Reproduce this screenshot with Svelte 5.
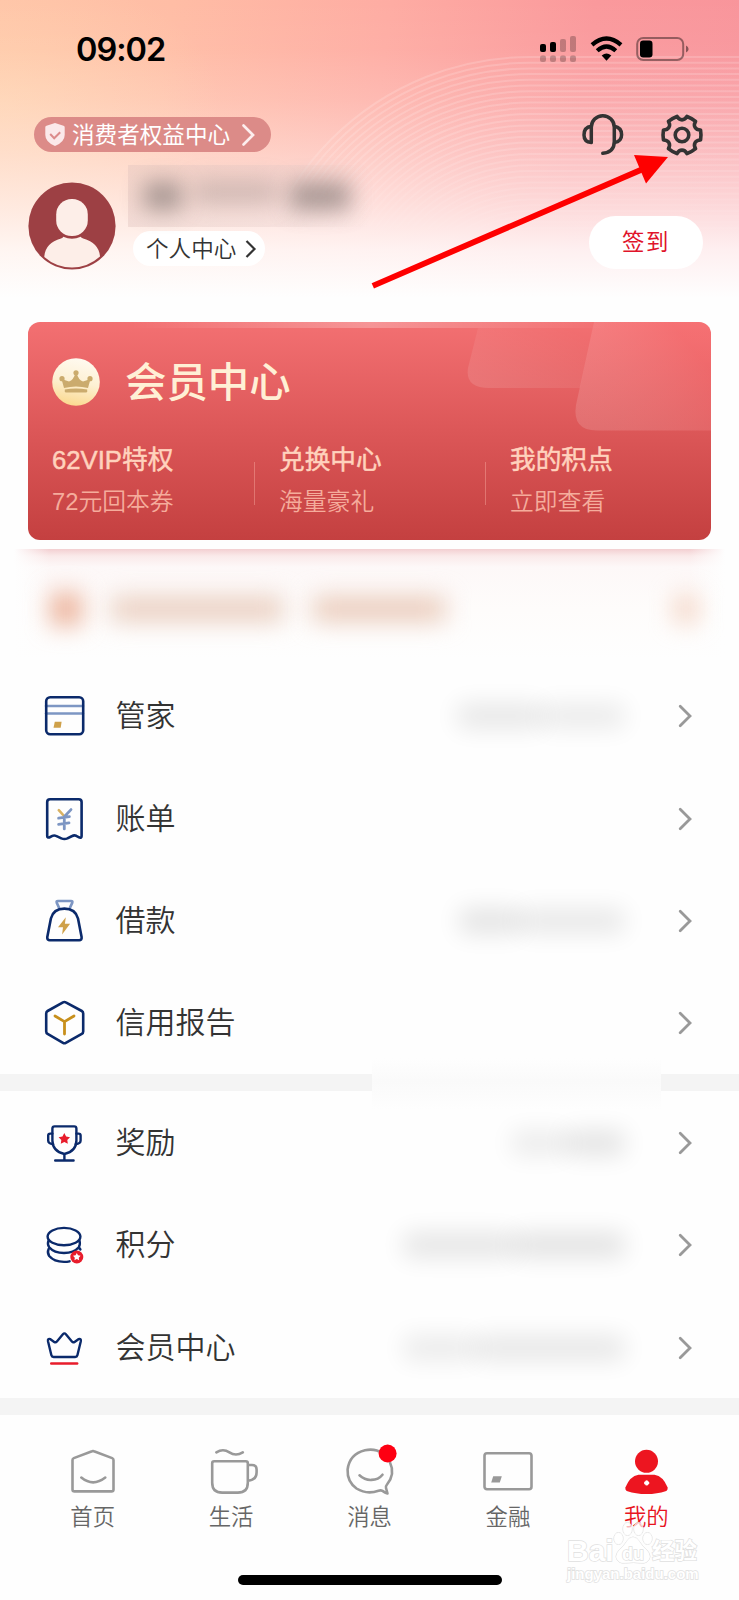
<script lang="ts">
  interface Row {
    icon: string;
    label: string;
    blobs: { width: number; tone: number }[];
  }

  const accountRows: Row[] = [
    { icon: 'card', label: '管家', blobs: [{ width: 84, tone: 0.095 }, { width: 82, tone: 0.08 }] },
    { icon: 'bill', label: '账单', blobs: [] },
    { icon: 'loan', label: '借款', blobs: [{ width: 60, tone: 0.11 }, { width: 104, tone: 0.09 }] },
    { icon: 'credit', label: '信用报告', blobs: [] },
  ];

  const rewardRows: Row[] = [
    { icon: 'trophy', label: '奖励', blobs: [{ width: 54, tone: 0.075 }, { width: 58, tone: 0.11 }] },
    { icon: 'coins', label: '积分', blobs: [{ width: 110, tone: 0.1 }, { width: 110, tone: 0.115 }] },
    { icon: 'crown', label: '会员中心', blobs: [{ width: 72, tone: 0.08 }, { width: 148, tone: 0.095 }] },
  ];

  const perks = [
    { title: '62VIP特权', sub: '72元回本券' },
    { title: '兑换中心', sub: '海量豪礼' },
    { title: '我的积点', sub: '立即查看' },
  ];

  const tabs = [
    { icon: 'home', label: '首页' },
    { icon: 'life', label: '生活' },
    { icon: 'message', label: '消息' },
    { icon: 'finance', label: '金融' },
    { icon: 'me', label: '我的' },
  ];

  const rings = Array.from({ length: 34 }, (_, i) => 281 - i * 5.7);

  function polar(deg: number, r: number): string {
    const a = (deg * Math.PI) / 180;
    return `${(22 + r * Math.cos(a)).toFixed(2)} ${(22 + r * Math.sin(a)).toFixed(2)}`;
  }

  // six-lobed gear outline, one lobe every 60 degrees
  function gearPath(): string {
    let d = `M${polar(-15, 19.2)}`;
    for (let a = 0; a < 360; a += 60) {
      d += ` Q${polar(a, 19.4)} ${polar(a + 15, 19.2)}`;
      d += ` C${polar(a + 20, 14.2)} ${polar(a + 40, 14.2)} ${polar(a + 45, 19.2)}`;
    }
    return d + 'Z';
  }

  function starPoints(cx: number, cy: number, r: number): string {
    return Array.from({ length: 10 }, (_, i) => {
      const a = ((i * 36 - 90) * Math.PI) / 180;
      const k = i % 2 ? r * 0.52 : r;
      return `${(cx + k * Math.cos(a)).toFixed(2)},${(cy + k * Math.sin(a)).toFixed(2)}`;
    }).join(' ');
  }
</script>

{#snippet rowIcon(name: string)}
  <svg class="row-icon" viewBox="0 0 44 44" fill="none" stroke="#0b2a6b" stroke-width="2.6" stroke-linecap="round" stroke-linejoin="round">
    {#if name === 'card'}
      <path d="M4 12H41M4 19.5H41" stroke="#7d96c3" />
      <rect x="4.2" y="3.2" width="37" height="37" rx="4" />
      <path d="M12.8 27.8h6.8l-.9 6h-7.2z" fill="#cfa14a" stroke="none" />
    {:else if name === 'bill'}
      <path d="M5.2 39V5q0-2.8 2.8-2.8h28.8q2.8 0 2.8 2.8v34q0 2-2 1.6l-3.4-1.8q-2-.9-4 .2l-4.8 2.4q-3 1.2-6 0L14 38.9q-1.8-.9-3.6 0l-3.2 1.6q-2 .4-2-1.5z" />
      <path d="M16.8 13.2l5.7 6.3" stroke="#d9b262" />
      <path d="M29 12.6l-6.700 7.100v12.200M16.600 21.200l10.800-1.500M16.600 27.400l10.400-1.500" stroke="#7d96c3" stroke-width="2.8" />
    {:else if name === 'loan'}
      <path d="M17 8.600l-2.300-5q-.5-1.600 1.200-1.600h13.200q1.700 0 1.200 1.600l-2.300 5" stroke="#7d96c3" />
      <path d="M5.300 38l3.600-18.500Q11.400 9.600 22.400 9.600T36 19.500l3.600 18.500q.4 3.200-2.400 3.200H7.800Q5 41.200 5.300 38z" />
      <path d="M23.800 18.200L16 28.300h5l-.9 7.200 8-10.700h-5.200z" fill="#cfa14a" stroke="none" />
    {:else if name === 'credit'}
      <path d="M21 1.400q1.400-.8 2.800 0L39.800 10q1.400.8 1.400 2.400v18q0 1.600-1.400 2.400L23.800 41.800q-1.400.8-2.800 0L5.600 32.800q-1.400-.8-1.400-2.400v-18q0-1.600 1.400-2.400z" />
      <path d="M13 15l9.500 5.600L32 15M22.500 20.600V33" stroke="#c8901c" stroke-width="2.8" />
    {:else if name === 'trophy'}
      <path d="M12.600 5.400h19.600q2.200 0 2.200 2.200v11.800q0 10.600-12 13.600-12-3-12-13.600V7.600q0-2.200 2.200-2.200zM22.400 33v6.200M13.200 39.500h18.400" stroke-width="2.4" />
      <path d="M10.400 12.600H8.200q-2 0-2 2v5q0 3.200 5 3.700M34.400 12.600h2.200q2 0 2 2v5q0 3.200-5 3.700" stroke-width="2.4" />
      <polygon points={starPoints(22.3, 18, 6)} fill="#e81c2b" stroke="none" />
    {:else if name === 'coins'}
      <ellipse cx="22" cy="13.600" rx="16.400" ry="8.700" stroke-width="2.4" />
      <path d="M6.600 17.400q-1.600 3.600.6 6.800 5 5.800 14.800 5.800t14.800-5.800q1.800-3 .6-6.800M6.600 26q-1.600 3.600.6 7Q12 38.700 22 38.900q3 0 5.600-.6M37.400 25l1 1.500" stroke-width="2.4" />
      <circle cx="34.800" cy="34" r="6.500" fill="#e81c2b" stroke="none" />
      <polygon points={starPoints(34.8, 34, 4)} fill="#fff" stroke="none" />
    {:else}
      <path d="M9.400 29.300L6 15.200q-.5-3 2.400-2l3.800 2.700q1.500 1 2.700-.4l6-7.300q1.500-1.700 3 0l6 7.300q1.200 1.400 2.700.4l3.800-2.700q2.900-1 2.400 2l-3.400 14.100q-.4 1.700-2.200 1.700H11.600q-1.800 0-2.200-1.700z" stroke-width="2.4" />
      <path d="M9.200 37.500h26" stroke="#e81c2b" stroke-width="2.4" />
    {/if}
  </svg>
{/snippet}

{#snippet listRow(row: Row)}
  <div class="row">
    {@render rowIcon(row.icon)}
    <span class="row-label">{row.label}</span>
    <div class="row-value">
      {#each row.blobs as blob}
        <i style="width: {blob.width}px; opacity: {blob.tone};"></i>
      {/each}
    </div>
    <svg class="row-arrow" viewBox="0 0 14 24" fill="none" stroke="#999" stroke-width="2.8" stroke-linecap="round">
      <path d="M2.200 2.200L12 12 2.200 21.800" />
    </svg>
  </div>
{/snippet}

<div class="screen">
  <header>
    <svg class="rings" viewBox="0 0 739 322" fill="none" stroke="#fff" stroke-width="2">
      <defs>
        <linearGradient id="ringFade" x1="0" y1="0" x2="0" y2="1">
          <stop offset="0.150" stop-color="#fff" stop-opacity="0.17" />
          <stop offset="0.450" stop-color="#fff" stop-opacity="0.16" />
          <stop offset="0.800" stop-color="#fff" stop-opacity="0" />
        </linearGradient>
        <mask id="ringMask">
          <rect width="739" height="322" fill="url(#ringFade)" stroke="none" />
        </mask>
      </defs>
      <g mask="url(#ringMask)">
        {#each rings as r}
          <path d="M739 {338 - r}H530A{r} {r} 0 0 0 {530 - r} 338" />
        {/each}
      </g>
    </svg>

    <div class="status">
      <span class="time">09:02</span>
      <svg width="150" height="30" viewBox="0 0 150 30">
        <g fill="#000">
          <rect x="0" y="9" width="6" height="8" rx="2" />
          <rect x="10" y="7" width="6" height="10" rx="2" />
        </g>
        <g fill="#000" opacity="0.230">
          <rect x="20" y="4" width="6" height="13" rx="2" />
          <rect x="30" y="1" width="6" height="16" rx="2" />
          <rect x="0" y="20.500" width="6" height="6.500" rx="2" />
          <rect x="10" y="20.500" width="6" height="6.500" rx="2" />
          <rect x="20" y="20.500" width="6" height="6.500" rx="2" />
          <rect x="30" y="20.500" width="6" height="6.500" rx="2" />
        </g>
        <g fill="none" stroke="#000" stroke-width="4.200">
          <path d="M52 9.800Q66.500-2.800 81 9.800" />
          <path d="M57.200 15.700Q66.500 7.300 75.800 15.700" />
        </g>
        <path d="M61.700 20.400Q66.500 16.600 71.300 20.400L66.500 25.800z" />
        <rect x="97.200" y="3" width="46" height="22" rx="6" fill="none" stroke="#000" stroke-opacity="0.400" stroke-width="2" />
        <rect x="100" y="5.500" width="12.500" height="17" rx="3.200" />
        <path d="M146 10.500q2.600 1 2.600 3.500T146 17.500z" opacity="0.450" />
      </svg>
    </div>

    <div class="toolbar">
      <div class="rights">
        <svg width="20" height="23" viewBox="0 0 20 23">
          <path d="M10 0l8.500 2.700q1.200.3 1.200 1.600V12q0 7-9.700 11Q.3 19 .3 12V4.300Q.3 3 1.500 2.700z" fill="#fbe9ea" />
          <path d="M5.200 11l4 4.200 6-6" fill="none" stroke="#dc8b8b" stroke-width="2" />
        </svg>
        <span>消费者权益中心</span>
        <svg width="13" height="22" viewBox="0 0 13 22" fill="none" stroke="#fdeeee" stroke-width="2.700" stroke-linecap="round">
          <path d="M1.500 1.500L11 11l-9.500 9.500" />
        </svg>
      </div>
      <div class="tools">
        <svg width="44" height="44" viewBox="0 0 44 44" fill="none" stroke="#333" stroke-width="3.500" stroke-linecap="round" stroke-linejoin="round">
          <path d="M10.300 29V14.200a11.500 11.500 0 0 1 23 0v14.300q0 10.600-11.500 11.800M10.300 13.300q-7.300 1-7.300 8.600 0 7 7.300 7.600M33.300 13.300q7.300 1.300 7.300 8.400 0 6.800-7.300 7.800" />
        </svg>
        <svg width="44" height="44" viewBox="0 0 44 44" fill="none" stroke="#333" stroke-width="3.600" stroke-linejoin="round">
          <path d={gearPath()} />
          <circle cx="22" cy="22" r="6.800" />
        </svg>
      </div>
    </div>

    <div class="profile">
      <svg class="avatar" viewBox="0 0 88 88">
        <circle cx="44" cy="44" r="43.600" fill="#9d4044" />
        <path d="M16.300 75Q17 61 33 56.500q2-.8 2.300-1.700 8.700 3.700 17.400 0 .5 1 2.500 1.700Q71 61 72 74.500 60 85.300 44 85.600 28 85.300 16.300 75z" fill="#fdeee8" />
        <rect x="28.200" y="17" width="31.600" height="37" rx="15.500" fill="#fdeee8" />
      </svg>
      <div class="identity">
        <div class="name-mask"><i></i><i></i><i></i></div>
        <div class="center-link">
          <span>个人中心</span>
          <svg width="11" height="18" viewBox="0 0 11 18" fill="none" stroke="#333" stroke-width="2.200">
            <path d="M1.500 1L9.500 9l-8 8" />
          </svg>
        </div>
      </div>
      <div class="checkin">签到</div>
    </div>

    <svg class="pointer" viewBox="0 0 300 140">
      <path d="M.8 130.800L271 14" stroke="#fe0000" stroke-width="5.800" />
      <path d="M262 0L296 2 274 28.500z" fill="#fe0000" />
    </svg>
  </header>

  <section class="vip">
    <svg class="vip-art" viewBox="0 0 683 218">
      <defs>
        <linearGradient id="panelA" x1="0" y1="1" x2="1" y2="0">
          <stop offset="0" stop-color="#fff" stop-opacity="0.130" />
          <stop offset="0.900" stop-color="#fff" stop-opacity="0" />
        </linearGradient>
        <linearGradient id="panelB" x1="0" y1="0.900" x2="0.900" y2="0.300">
          <stop offset="0" stop-color="#fff" stop-opacity="0.140" />
          <stop offset="1" stop-color="#ff7378" stop-opacity="0.250" />
        </linearGradient>
      </defs>
      <path d="M450 6L440 46Q437 66 461 66H552L565 6z" fill="url(#panelA)" />
      <path d="M566 0L548 83Q544 108.500 569 108.500H683V0z" fill="url(#panelB)" />
    </svg>
    <div class="vip-head">
      <svg width="48" height="48" viewBox="0 0 48 48">
        <defs>
          <linearGradient id="coin" x1="0.600" y1="0" x2="0.400" y2="1">
            <stop offset="0" stop-color="#fffaf0" />
            <stop offset="0.500" stop-color="#fdf0d3" />
            <stop offset="1" stop-color="#fbd98f" />
          </linearGradient>
        </defs>
        <circle cx="24" cy="24" r="23.800" fill="url(#coin)" />
        <g fill="#cbab6d">
          <circle cx="24" cy="14.800" r="2.600" />
          <circle cx="10" cy="20.700" r="2.600" />
          <circle cx="38" cy="20.700" r="2.600" />
          <path d="M9.500 21l7.500 2.500q4.500-1.500 6.300-8h1.400q1.800 6.500 6.300 8l7.500-2.500-2.500 9Q24 27 12 30z" />
          <path d="M12.800 31.500Q24 29.300 35.200 31.500v1.800q0 1.200-1.200 1.200H14q-1.200 0-1.200-1.200z" />
        </g>
      </svg>
      <h1>会员中心</h1>
    </div>
    <div class="perks">
      {#each perks as perk}
        <div class="perk">
          <b>{perk.title}</b>
          <span>{perk.sub}</span>
        </div>
      {/each}
    </div>
  </section>

  <div class="notice">
    <i class="dot"></i>
    <i class="line"></i>
    <i class="line short"></i>
    <i class="end"></i>
  </div>

  <section class="list">
    {#each accountRows as row}
      {@render listRow(row)}
    {/each}
  </section>
  <div class="divider"><div class="smudge"></div></div>
  <section class="list">
    {#each rewardRows as row}
      {@render listRow(row)}
    {/each}
  </section>
  <div class="divider"></div>

  <nav>
    {#each tabs as tab}
      <div class="tab" class:active={tab.icon === 'me'}>
        <svg viewBox="0 0 50 50" fill="none" stroke="#999" stroke-width="2.600" stroke-linecap="round" stroke-linejoin="round">
          {#if tab.icon === 'home'}
            <path d="M4.500 13q0-1.400 1.300-1.900L24 4.300q1-.4 2 0l18.200 6.800q1.300.5 1.300 1.900v29.400q0 2-2 2h-37q-2 0-2-2zM13.300 30.600q11.700 9.600 24 0" />
          {:else if tab.icon === 'life'}
            <path d="M8.200 14.200h31.600q2 0 2 2v19.500q0 9.900-9.900 9.900H16.100q-9.900 0-9.900-9.900V16.200q0-2 2-2zM42 18h4q4.600 0 4.600 4.600v2.600q0 7.800-8.400 8.600M10.400 5.400q6.600-4.200 13 0t13.400 0" />
          {:else if tab.icon === 'message'}
            <path d="M45 15.500Q50.500 27 42 37.500q-1.600 1.800-1 3.500l1.500 5.500q-2.500-.8-5-2.600-1.800-1-4-.2Q22 48 11.500 41.500 2 34.500 2.600 22.500 4.500 7 20 3.200q10-2 17.500 3M14.500 28.300q5.500 5 12 4.600 7-.2 11-5.200" />
            <circle cx="42.600" cy="6.500" r="9" fill="#fe0012" stroke="none" />
          {:else if tab.icon === 'finance'}
            <rect x="1.500" y="6.200" width="47" height="36" rx="2.500" />
            <path d="M10.200 29.200h8.600l-2 6.200H8.200z" fill="#999" stroke="none" />
          {:else}
            <g fill="#ed1520" stroke="none">
              <circle cx="25.500" cy="14.300" r="11.500" />
              <path d="M17.500 27.700h16q8.700 1.500 13 12.500.7 3-2 4Q36.500 47 25.500 47T6.500 44.200q-2.700-1-2-4 4.300-11 13-12.500z" />
            </g>
            <path d="M25.700 34.800v2.200M24.600 35.900h2.200" stroke="#fff" stroke-width="3.200" />
          {/if}
        </svg>
        <span>{tab.label}</span>
      </div>
    {/each}
    <div class="home-bar"></div>
    <div class="watermark">
      <svg width="40" height="44" viewBox="0 0 40 44" fill="#fff" fill-opacity="0.700" stroke="#e0e0e0" stroke-width="1">
        <ellipse cx="5.500" cy="17.500" rx="4.600" ry="6" />
        <ellipse cx="14.500" cy="8" rx="4.600" ry="6.500" />
        <ellipse cx="25.500" cy="8" rx="4.600" ry="6.500" />
        <ellipse cx="34.500" cy="17.500" rx="4.600" ry="6" />
        <path d="M20 16q4 0 6.500 4.500t7.500 8.500q6 7 0 12-3 2-8 1t-12 0q-5 1-8-1-6-5 0-12 5-4 7.500-8.500T20 16z" />
      </svg>
      <span class="wm-bai">Bai</span>
      <span class="wm-du">du</span>
      <span class="wm-cn">经验</span>
      <span class="wm-url">jingyan.baidu.com</span>
    </div>
  </nav>
</div>

<style>
  :global(body) {
    margin: 0;
    background: #fff;
  }

  .screen {
    width: 739px;
    height: 1600px;
    display: flex;
    flex-direction: column;
    overflow: hidden;
    background: #fefefe;
    color: #333;
    font-family: 'Liberation Sans', 'Noto Sans CJK SC', sans-serif;
  }

  svg {
    display: block;
    flex-shrink: 0;
    overflow: visible;
  }

  /* Header */
  header {
    position: relative;
    height: 322px;
    flex-shrink: 0;
    background:
      linear-gradient(180deg, rgba(255, 255, 255, 0) 0, rgba(255, 255, 255, 0.04) 50px, rgba(255, 253, 252, 0.17) 98px, rgba(255, 253, 252, 0.38) 150px, rgba(255, 253, 252, 0.62) 200px, rgba(255, 254, 254, 0.86) 250px, #fefefe 298px),
      radial-gradient(ellipse 220px 130px at 0 100px, rgba(255, 226, 180, 0.4), rgba(255, 226, 180, 0)),
      linear-gradient(98deg, #ffc4a8 0, #ffbda5 22%, #feaca3 50%, #fa999c 76%, #f8949b 100%);
  }

  .rings {
    position: absolute;
    inset: 0;
    width: 739px;
    height: 322px;
  }

  .status,
  .toolbar,
  .profile {
    position: relative;
    display: flex;
    box-sizing: border-box;
  }

  .status {
    height: 98px;
    padding: 0 49px 0 76px;
    align-items: center;
    justify-content: space-between;
  }

  .status svg {
    margin-top: 2px;
  }

  .time {
    margin-top: 2px;
    font: 600 32.5px/40px Inter, sans-serif;
    letter-spacing: -1px;
    color: #000;
  }

  .toolbar {
    height: 67px;
    padding: 6px 35px 0 34px;
    align-items: center;
    justify-content: space-between;
  }

  .rights {
    display: flex;
    align-items: center;
    width: 237px;
    height: 35px;
    box-sizing: border-box;
    padding-left: 11px;
    border-radius: 18px;
    background: #dc8b88;
    color: #fff;
    font-size: 22.6px;
  }

  .rights span {
    margin: 2px 12px 0 7px;
    white-space: nowrap;
    line-height: 35px;
  }

  .tools {
    display: flex;
    gap: 35px;
  }

  .profile {
    height: 101px;
    padding: 0 36px 0 28px;
    align-items: flex-start;
  }

  .avatar {
    width: 88px;
    height: 88px;
    margin-top: 17px;
  }

  .identity {
    display: flex;
    flex-direction: column;
    gap: 4px;
    margin-left: 12px;
  }

  .name-mask {
    display: flex;
    align-items: center;
    gap: 12px;
    box-sizing: border-box;
    width: 240px;
    height: 62px;
    padding-left: 16px;
    background: linear-gradient(90deg, rgba(225, 195, 190, 0.4), rgba(225, 200, 198, 0.25) 70%, rgba(225, 200, 198, 0));
  }

  .name-mask i {
    width: 38px;
    height: 28px;
    background: #8f827f;
    filter: blur(11px);
    opacity: 0.76;
  }

  .name-mask i:nth-child(2) {
    width: 84px;
    height: 24px;
    margin-top: -8px;
    opacity: 0.36;
  }

  .name-mask i:nth-child(3) {
    width: 60px;
  }

  .center-link {
    display: flex;
    align-items: center;
    gap: 9px;
    width: 132px;
    height: 35px;
    box-sizing: border-box;
    margin-left: 5px;
    padding-left: 13px;
    border-radius: 18px;
    background: #fff;
    font-size: 22.6px;
    font-weight: 350;
    line-height: 35px;
    white-space: nowrap;
  }

  .center-link span {
    padding-top: 1px;
  }

  .checkin {
    width: 114px;
    height: 53px;
    margin: 51px 0 0 auto;
    border-radius: 27px;
    background: #fff;
    color: #e0142b;
    font-size: 22.4px;
    font-weight: 400;
    line-height: 54px;
    letter-spacing: 1.6px;
    text-align: center;
  }

  .pointer {
    position: absolute;
    left: 372px;
    top: 155px;
    width: 300px;
    height: 140px;
  }

  /* Member card */
  .vip {
    position: relative;
    box-sizing: border-box;
    height: 218px;
    flex-shrink: 0;
    margin: 0 28px;
    padding: 36px 24px 0;
    border-radius: 12px;
    overflow: hidden;
    background:
      linear-gradient(90deg, rgba(255, 255, 255, 0) 15%, rgba(255, 255, 255, 0.26) 50%, rgba(255, 255, 255, 0) 85%) 0 0 / 100% 6px no-repeat,
      linear-gradient(180deg, #f37072 0, #dc5758 50%, #c44040 100%);
  }

  .vip-art {
    position: absolute;
    inset: 0;
    width: 683px;
    height: 218px;
  }

  .vip-head {
    position: relative;
    display: flex;
    align-items: center;
    gap: 25px;
    height: 48px;
  }

  h1 {
    margin: 2px 0 0;
    color: #fff0d5;
    font-size: 41.4px;
    font-weight: 500;
    line-height: 48px;
  }

  .perks {
    position: relative;
    display: grid;
    grid-template-columns: 202px 231px 1fr;
    margin-top: 33px;
  }

  .perk {
    position: relative;
    display: flex;
    flex-direction: column;
    line-height: 42px;
    white-space: nowrap;
  }

  .perk + .perk {
    padding-left: 25px;
  }

  .perk + .perk::before {
    content: '';
    position: absolute;
    left: 0;
    top: 23px;
    width: 1px;
    height: 43px;
    background: rgba(255, 190, 175, 0.38);
  }

  .perk b {
    color: #ffd2bd;
    font-size: 25.7px;
    font-weight: 400;
    -webkit-text-stroke: 0.5px #ffd2bd;
  }

  .perk span {
    color: #f5ac9c;
    font-size: 23.8px;
    font-weight: 350;
    line-height: 42px;
  }

  /* Blurred notice strip */
  .notice {
    display: flex;
    align-items: center;
    box-sizing: border-box;
    height: 115px;
    flex-shrink: 0;
    margin: 9px 14px 0;
    padding: 4px 28px 0 37px;
    background:
      linear-gradient(90deg, #fefefe 0, rgba(254, 254, 254, 0) 5%, rgba(254, 254, 254, 0) 95%, #fefefe 100%),
      linear-gradient(180deg, #f3cfd1 0, #faeaea 7px, #fdf8f8 18px, #fefcfb 60px, #fefefe 110px);
  }

  .notice i {
    height: 24px;
    filter: blur(12px);
  }

  .notice .dot {
    width: 30px;
    height: 32px;
    background: #eaac93;
  }

  .notice .line {
    width: 172px;
    margin-left: 30px;
    background: #e9cdbe;
  }

  .notice .short {
    width: 132px;
    background: #e9c9b8;
  }

  .notice .end {
    width: 22px;
    height: 26px;
    margin-left: auto;
    background: #f3d0be;
  }

  /* Lists */
  .list {
    flex-shrink: 0;
  }

  .row {
    display: flex;
    align-items: center;
    box-sizing: border-box;
    height: 102.4px;
    padding: 2px 47px 0 41.5px;
  }

  .row-icon {
    width: 44px;
    height: 44px;
  }

  .row-label {
    margin-left: 30px;
    font-size: 30px;
    font-weight: 350;
    line-height: 44px;
  }

  .row-value {
    display: flex;
    flex: 1;
    justify-content: flex-end;
    margin-right: 54px;
  }

  .row-value i {
    height: 24px;
    background: #000;
    filter: blur(12px);
  }

  .row-arrow {
    width: 14px;
    height: 24px;
  }

  .divider {
    position: relative;
    height: 17px;
    flex-shrink: 0;
    background: #f4f4f4;
  }

  .smudge {
    position: absolute;
    left: 372px;
    top: -16px;
    width: 289px;
    height: 52px;
    background: linear-gradient(180deg, #fefefe 0, #fafafa 45%, #fbfbfb 60%, #fefefe 100%);
  }

  /* Tab bar */
  nav {
    position: relative;
    display: flex;
    flex: 1;
    align-items: flex-start;
    padding: 32px 23.5px 0;
  }

  .tab {
    display: flex;
    flex: 1;
    flex-direction: column;
    align-items: center;
    gap: 6px;
    color: #666;
    font-size: 22.4px;
    font-weight: 350;
    line-height: 30px;
  }

  .tab svg {
    width: 50px;
    height: 50px;
  }

  .tab.active {
    color: #e8141f;
  }

  .home-bar {
    position: absolute;
    left: 238px;
    bottom: 15px;
    width: 264px;
    height: 10px;
    border-radius: 5px;
    background: #000;
  }

  .watermark {
    position: absolute;
    left: 567px;
    top: 106px;
    width: 135px;
    height: 65px;
    color: #fff;
    font-weight: 700;
    white-space: nowrap;
    -webkit-text-stroke: 1.4px #e0e0e0;
    paint-order: stroke fill;
  }

  .watermark svg {
    position: absolute;
    left: 46px;
    top: 0;
  }

  .watermark span {
    position: absolute;
  }

  .wm-bai {
    left: 0;
    top: 16px;
    font-size: 30px;
    line-height: 28px;
  }

  .wm-du {
    left: 55px;
    top: 22px;
    font-size: 18px;
    line-height: 22px;
  }

  .wm-cn {
    left: 85px;
    top: 18px;
    font-size: 22.5px;
    line-height: 26px;
  }

  .wm-url {
    left: 0;
    top: 44px;
    font-size: 15px;
    line-height: 17px;
  }
</style>
